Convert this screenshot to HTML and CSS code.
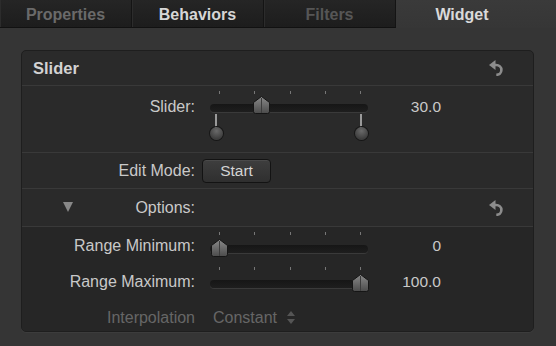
FILE: index.html
```html
<!DOCTYPE html>
<html>
<head>
<meta charset="utf-8">
<link rel="stylesheet" href="styles.css">
</head>
<body>
<div class="tabs">
  <div class="tab dim">Properties</div>
  <div class="tab lit">Behaviors</div>
  <div class="tab dim2">Filters</div>
  <div class="tab active">Widget</div>
  <div class="tab-fill"></div>
</div>
<div class="panel">
  <div class="box">
    <div class="hdr">
      <span class="hdr-title">Slider</span>
      <svg class="reset" width="14" height="16" viewBox="0 0 14 16"><polygon points="0,5 6.5,0 6.5,10" fill="#8c8c8c"/><path d="M5 5 H7 C10.3 5 12.4 7.3 12.4 10 C12.4 12.8 10.3 14.8 7.3 14.8" fill="none" stroke="#8c8c8c" stroke-width="2.6"/></svg>
    </div>
    <div class="row r-slider">
      <div class="lbl">Slider:</div>
      <div class="slider big">
        <i class="tick" style="left:9px"></i><i class="tick" style="left:44px"></i><i class="tick" style="left:80px"></i><i class="tick" style="left:115px"></i><i class="tick" style="left:150px"></i>
        <div class="track"></div>
        <svg class="thumb" style="left:43px" width="17" height="18" viewBox="0 0 17 18"><defs><linearGradient id="g1" x1="0" y1="0" x2="0" y2="1"><stop offset="0" stop-color="#8a8a8a"/><stop offset="1" stop-color="#4b4b4b"/></linearGradient></defs><path d="M0.5 6.5 L8.5 0.5 L16.5 6.5 L16.5 15.5 Q16.5 17.5 14.5 17.5 L2.5 17.5 Q0.5 17.5 0.5 15.5 Z" fill="url(#g1)" stroke="#151515"/><line x1="8.5" y1="2" x2="8.5" y2="17" stroke="#3c3c3c"/></svg>
        <div class="pin" style="left:0px"><span class="stem"></span><span class="ball"></span></div>
        <div class="pin" style="left:145px"><span class="stem"></span><span class="ball"></span></div>
      </div>
      <div class="val">30.0</div>
    </div>
    <div class="row r-edit">
      <div class="lbl">Edit Mode:</div>
      <div class="btn">Start</div>
    </div>
    <div class="row r-opts">
      <div class="lbl opts-lbl"><span class="tri"></span><span>Options:</span></div>
      <svg class="reset" width="14" height="16" viewBox="0 0 14 16"><polygon points="0,5 6.5,0 6.5,10" fill="#8c8c8c"/><path d="M5 5 H7 C10.3 5 12.4 7.3 12.4 10 C12.4 12.8 10.3 14.8 7.3 14.8" fill="none" stroke="#8c8c8c" stroke-width="2.6"/></svg>
    </div>
    <div class="opts-body">
      <div class="row r-range r-min">
        <div class="lbl">Range Minimum:</div>
        <div class="slider small">
          <i class="tick" style="left:9px"></i><i class="tick" style="left:44px"></i><i class="tick" style="left:80px"></i><i class="tick" style="left:115px"></i><i class="tick" style="left:150px"></i>
          <div class="track"></div>
          <svg class="thumb" style="left:1px" width="17" height="18" viewBox="0 0 17 18"><defs><linearGradient id="g2" x1="0" y1="0" x2="0" y2="1"><stop offset="0" stop-color="#8a8a8a"/><stop offset="1" stop-color="#4b4b4b"/></linearGradient></defs><path d="M0.5 6.5 L8.5 0.5 L16.5 6.5 L16.5 15.5 Q16.5 17.5 14.5 17.5 L2.5 17.5 Q0.5 17.5 0.5 15.5 Z" fill="url(#g2)" stroke="#151515"/><line x1="8.5" y1="2" x2="8.5" y2="17" stroke="#3c3c3c"/></svg>
        </div>
        <div class="val">0</div>
      </div>
      <div class="row r-range r-max">
        <div class="lbl">Range Maximum:</div>
        <div class="slider small">
          <i class="tick" style="left:9px"></i><i class="tick" style="left:44px"></i><i class="tick" style="left:80px"></i><i class="tick" style="left:115px"></i><i class="tick" style="left:150px"></i>
          <div class="track"></div>
          <svg class="thumb" style="left:142px" width="17" height="18" viewBox="0 0 17 18"><defs><linearGradient id="g3" x1="0" y1="0" x2="0" y2="1"><stop offset="0" stop-color="#8a8a8a"/><stop offset="1" stop-color="#4b4b4b"/></linearGradient></defs><path d="M0.5 6.5 L8.5 0.5 L16.5 6.5 L16.5 15.5 Q16.5 17.5 14.5 17.5 L2.5 17.5 Q0.5 17.5 0.5 15.5 Z" fill="url(#g3)" stroke="#151515"/><line x1="8.5" y1="2" x2="8.5" y2="17" stroke="#3c3c3c"/></svg>
        </div>
        <div class="val">100.0</div>
      </div>
      <div class="row r-interp">
        <div class="lbl faint">Interpolation</div>
        <div class="popup"><span>Constant</span><svg width="8" height="14" viewBox="0 0 8 14"><polygon points="4,0 8,5 0,5" fill="#555"/><polygon points="0,8 8,8 4,13" fill="#555"/></svg></div>
      </div>
    </div>
  </div>
</div>
</body>
</html>
```

FILE: styles.css
```css
* { box-sizing: border-box; }
html, body { margin: 0; padding: 0; }
body {
  width: 556px;
  height: 346px;
  overflow: hidden;
  background: #353535;
  font-family: "Liberation Sans", Arial, sans-serif;
  color: #cdcdcd;
}
.tabs {
  display: flex;
  height: 28px;
}
.tab {
  width: 132px;
  height: 28px;
  display: flex;
  align-items: center;
  justify-content: center;
  font-size: 16px;
  font-weight: bold;
  background: linear-gradient(#252525, #1d1d1d);
  border-bottom: 1px solid #111;
  border-right: 1px solid #141414;
  box-shadow: inset 1px 0 0 #2c2c2c;
  padding-top: 2px;
}
.tab.dim { color: #6a6a6a; }
.tab.lit { color: #d6d6d6; }
.tab.dim2 { color: #565656; }
.tab.active {
  background: linear-gradient(#3a3a3a, #363636);
  color: #dadada;
  border-bottom: none;
  border-right: none;
  box-shadow: none;
}
.tab-fill {
  flex: 1;
  background: linear-gradient(#3a3a3a, #363636);
}
.panel {
  background: #353535;
  padding: 22px 22px 0 21px;
  height: 318px;
}
.box {
  background: #2a2a2a;
  border: 1px solid #1e1e1e;
  border-radius: 5px;
  overflow: hidden;
  box-shadow: 0 1px 0 #3c3c3c;
}
.hdr {
  height: 35px;
  border-bottom: 1px solid #393939;
  display: flex;
  align-items: center;
  justify-content: space-between;
  padding: 0 30px 0 11px;
}
.hdr-title {
  font-size: 16.5px;
  font-weight: bold;
  color: #d2d2d2;
}
.reset { display: block; }
.row {
  display: grid;
  align-items: center;
}
.lbl {
  text-align: right;
  font-size: 16px;
  color: #c9c9c9;
  white-space: nowrap;
}
.val {
  text-align: right;
  font-size: 15.5px;
  color: #c9c9c9;
}
.r-slider {
  height: 67px;
  border-bottom: 1px solid #393939;
  align-items: start;
  grid-template-columns: 173px 173px 73px;
}
.r-slider .lbl, .r-slider .val { margin-top: 12px; }
.r-range { grid-template-columns: 173px 173px 73px; }
.row .slider { margin-left: 15px; }
.slider {
  position: relative;
  width: 158px;
}
.slider.big { height: 56px; margin-top: 5px; }
.tick {
  position: absolute;
  top: 0;
  width: 1px;
  height: 3px;
  background: #777;
}
.track {
  position: absolute;
  left: 0;
  right: 0;
  top: 13px;
  height: 8px;
  border-radius: 4px;
  background: linear-gradient(#161616, #1e1e1e);
  box-shadow: 0 1px 0 #3a3a3a;
}
.thumb {
  position: absolute;
  top: 5px;
}
.pin {
  position: absolute;
  top: 23px;
  width: 13px;
  height: 26px;
}
.stem {
  position: absolute;
  left: 5px;
  top: 0;
  width: 2px;
  height: 14px;
  background: #9a9a9a;
}
.ball {
  position: absolute;
  left: 0;
  top: 13px;
  width: 13px;
  height: 13px;
  border-radius: 50%;
  background: radial-gradient(circle at 50% 30%, #6a6a6a, #3e3e3e 70%);
  box-shadow: 0 0 0 1px #161616;
}
.r-edit {
  height: 36px;
  border-bottom: 1px solid #393939;
  grid-template-columns: 173px auto;
  justify-content: start;
}
.btn {
  margin-left: 7px;
  width: 69px;
  height: 24px;
  border-radius: 4px;
  border: 1px solid #131313;
  background: linear-gradient(#3e3e3e, #2f2f2f);
  box-shadow: inset 0 1px 0 #4a4a4a;
  display: flex;
  align-items: center;
  justify-content: center;
  font-size: 15.5px;
  color: #d4d4d4;
}
.r-opts {
  height: 38px;
  border-bottom: 1px solid #393939;
  display: flex;
  align-items: center;
  justify-content: space-between;
  padding-right: 30px;
}
.opts-lbl {
  width: 173px;
  display: flex;
  align-items: center;
  justify-content: space-between;
  padding-left: 41px;
}
.tri {
  width: 0;
  height: 0;
  border-left: 5px solid transparent;
  border-right: 5px solid transparent;
  border-top: 10px solid #888;
  margin-top: -2px;
}
.opts-body {
  background: #262626;
}
.r-min { height: 37px; }
.r-max { height: 35px; }
.r-range .slider { height: 30px; }
.r-min .slider { margin-top: 3px; }
.r-range .track { top: 13px; }
.r-range .thumb { top: 7px; }
.r-interp {
  height: 32px;
  padding-top: 6px;
  grid-template-columns: 173px auto;
  justify-content: start;
  align-items: center;
}
.faint { color: #666; }
.popup {
  margin-left: 18px;
  display: flex;
  align-items: center;
  gap: 10px;
  font-size: 16px;
  color: #666;
}
.popup svg { display: block; }
```
